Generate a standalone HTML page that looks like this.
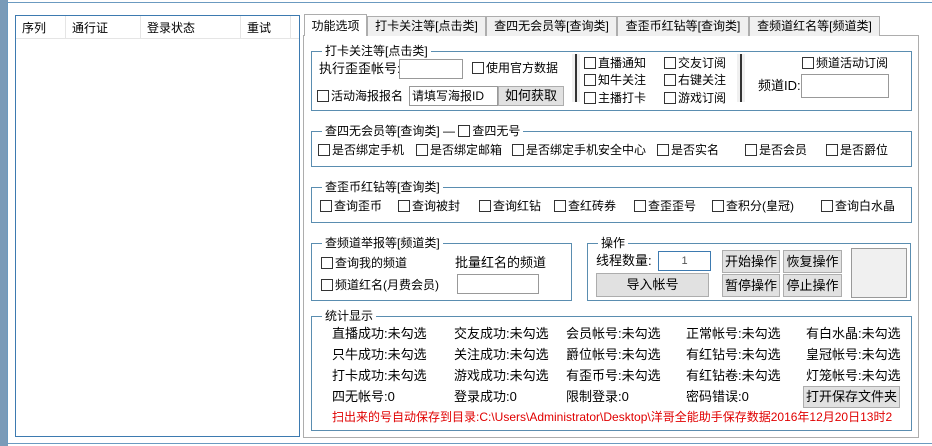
<!DOCTYPE html>
<html><head><meta charset="utf-8"><style>
*{box-sizing:border-box;margin:0;padding:0}
body{width:932px;height:446px;background:#fff;font-family:"Liberation Sans","Noto Sans CJK SC",sans-serif;font-size:12px;color:#000;position:relative;overflow:hidden}
.a{position:absolute;white-space:nowrap;line-height:16px}
.cb{display:inline-block;width:12px;height:12px;border:1px solid #333;background:#fff;vertical-align:-2px;margin-right:2px}
.grp{position:absolute;border:1px solid #5a8db0}
.gt{position:absolute;background:#fff;padding:0 3px;line-height:14px;top:-8px;left:10px;white-space:nowrap}
.in{position:absolute;border:1px solid #999;background:#fff}
.btn{position:absolute;border:1px solid #adadad;background:#e1e1e1;text-align:center;font-size:13px}
.tab{position:absolute;top:16px;height:20px;border:1px solid #adadad;border-bottom:none;background:#f0f0f0;text-align:center;line-height:18px}
.s{position:absolute;white-space:nowrap;font-size:13px;line-height:16px}
</style></head><body>
<div style="position:absolute;left:0;top:0;width:8px;height:446px;background:#7a9bb8"></div>
<div style="position:absolute;left:7px;top:2px;width:925px;height:442px;border:1px solid #6b9ac0;border-right:none;background:#fff"></div>
<div style="position:absolute;left:15px;top:15px;width:285px;height:422px;border:1px solid #3d7ab0;background:#fff"></div>
<div style="position:absolute;left:16px;top:16px;width:283px;height:23px;background:#fff;border-bottom:1px solid #e5e5e5"></div>
<div style="position:absolute;left:65px;top:16px;width:1px;height:23px;background:#e5e5e5"></div>
<div style="position:absolute;left:140px;top:16px;width:1px;height:23px;background:#e5e5e5"></div>
<div style="position:absolute;left:240px;top:16px;width:1px;height:23px;background:#e5e5e5"></div>
<div style="position:absolute;left:290px;top:16px;width:1px;height:23px;background:#e5e5e5"></div>
<div class="a" style="left:22px;top:20px">序列</div>
<div class="a" style="left:72px;top:20px">通行证</div>
<div class="a" style="left:147px;top:20px">登录状态</div>
<div class="a" style="left:247px;top:20px">重试</div>

<div style="position:absolute;left:303px;top:35px;width:616px;height:403px;border:1px solid #adadad;background:#fff"></div>
<div class="tab" style="left:304px;top:14px;height:22px;width:63px;background:#fff;line-height:22px">功能选项</div>
<div class="tab" style="left:367px;width:119px">打卡关注等[点击类]</div>
<div class="tab" style="left:486px;width:131px">查四无会员等[查询类]</div>
<div class="tab" style="left:617px;width:132px">查歪币红钻等[查询类]</div>
<div class="tab" style="left:749px;width:131px">查频道红名等[频道类]</div>

<div class="grp" style="left:311px;top:51px;width:601px;height:60px"><div class="gt">打卡关注等[点击类]</div></div>
<div class="a" style="left:319px;top:61px;font-size:13px;line-height:16px">执行歪歪帐号:</div>
<div class="in" style="left:399px;top:59px;width:64px;height:20px"></div>
<div class="a" style="left:472px;top:60px"><span class="cb"></span>使用官方数据</div>
<div class="a" style="left:317px;top:88px"><span class="cb"></span>活动海报报名</div>
<div class="in" style="left:409px;top:86px;width:89px;height:20px;font-size:12px;line-height:18px;padding-left:2px">请填写海报ID</div>
<div class="btn" style="left:498px;top:86px;width:66px;height:20px;line-height:18px">如何获取</div>
<div style="position:absolute;left:572px;top:54px;width:8px;height:48px;background:#f0f0f0"></div>
<div style="position:absolute;left:575px;top:54px;width:2px;height:48px;background:#333"></div>
<div style="position:absolute;left:737px;top:54px;width:8px;height:48px;background:#f0f0f0"></div>
<div style="position:absolute;left:740px;top:54px;width:2px;height:48px;background:#333"></div>
<div class="a" style="left:584px;top:55px"><span class="cb"></span>直播通知</div>
<div class="a" style="left:584px;top:72px"><span class="cb"></span>知牛关注</div>
<div class="a" style="left:584px;top:90px"><span class="cb"></span>主播打卡</div>
<div class="a" style="left:664px;top:55px"><span class="cb"></span>交友订阅</div>
<div class="a" style="left:664px;top:72px"><span class="cb"></span>右键关注</div>
<div class="a" style="left:664px;top:90px"><span class="cb"></span>游戏订阅</div>
<div class="a" style="left:802px;top:55px"><span class="cb"></span>频道活动订阅</div>
<div class="a" style="left:758px;top:78px;font-size:13px">频道ID:</div>
<div class="in" style="left:801px;top:74px;width:88px;height:24px"></div>

<div class="grp" style="left:311px;top:131px;width:601px;height:36px"><div class="gt">查四无会员等[查询类] — <span class="cb"></span>查四无号</div></div>
<div class="a" style="left:318px;top:142px"><span class="cb"></span>是否绑定手机</div>
<div class="a" style="left:416px;top:142px"><span class="cb"></span>是否绑定邮箱</div>
<div class="a" style="left:512px;top:142px"><span class="cb"></span>是否绑定手机安全中心</div>
<div class="a" style="left:657px;top:142px"><span class="cb"></span>是否实名</div>
<div class="a" style="left:745px;top:142px"><span class="cb"></span>是否会员</div>
<div class="a" style="left:826px;top:142px"><span class="cb"></span>是否爵位</div>

<div class="grp" style="left:311px;top:187px;width:601px;height:36px"><div class="gt">查歪币红钻等[查询类]</div></div>
<div class="a" style="left:320px;top:198px"><span class="cb"></span>查询歪币</div>
<div class="a" style="left:398px;top:198px"><span class="cb"></span>查询被封</div>
<div class="a" style="left:479px;top:198px"><span class="cb"></span>查询红钻</div>
<div class="a" style="left:554px;top:198px"><span class="cb"></span>查红砖券</div>
<div class="a" style="left:634px;top:198px"><span class="cb"></span>查歪歪号</div>
<div class="a" style="left:712px;top:198px"><span class="cb"></span>查积分(皇冠)</div>
<div class="a" style="left:821px;top:198px"><span class="cb"></span>查询白水晶</div>

<div class="grp" style="left:311px;top:243px;width:261px;height:58px"><div class="gt">查频道举报等[频道类]</div></div>
<div class="a" style="left:321px;top:255px"><span class="cb"></span>查询我的频道</div>
<div class="a" style="left:321px;top:277px"><span class="cb"></span>频道红名(月费会员)</div>
<div class="a" style="left:455px;top:255px;font-size:13px">批量红名的频道</div>
<div class="in" style="left:457px;top:274px;width:82px;height:20px"></div>

<div class="grp" style="left:587px;top:243px;width:324px;height:58px"><div class="gt">操作</div></div>
<div class="a" style="left:596px;top:253px;font-size:13px">线程数量:</div>
<div class="in" style="left:658px;top:251px;width:53px;height:20px;border-color:#3d7ab0;text-align:center;line-height:18px;font-size:11px;color:#555">1</div>
<div class="btn" style="left:596px;top:273px;width:113px;height:24px;line-height:22px">导入帐号</div>
<div class="btn" style="left:722px;top:250px;width:58px;height:23px;line-height:21px">开始操作</div>
<div class="btn" style="left:783px;top:250px;width:59px;height:23px;line-height:21px">恢复操作</div>
<div class="btn" style="left:722px;top:274px;width:58px;height:23px;line-height:21px">暂停操作</div>
<div class="btn" style="left:783px;top:274px;width:59px;height:23px;line-height:21px">停止操作</div>
<div style="position:absolute;left:851px;top:248px;width:56px;height:50px;border:1px solid #999;background:#f0f0f0"></div>

<div class="grp" style="left:311px;top:316px;width:601px;height:115px"><div class="gt">统计显示</div></div>
<div class="s" style="left:332px;top:326px">直播成功:未勾选</div>
<div class="s" style="left:332px;top:347px">只牛成功:未勾选</div>
<div class="s" style="left:332px;top:368px">打卡成功:未勾选</div>
<div class="s" style="left:332px;top:389px">四无帐号:0</div>
<div class="s" style="left:454px;top:326px">交友成功:未勾选</div>
<div class="s" style="left:454px;top:347px">关注成功:未勾选</div>
<div class="s" style="left:454px;top:368px">游戏成功:未勾选</div>
<div class="s" style="left:454px;top:389px">登录成功:0</div>
<div class="s" style="left:566px;top:326px">会员帐号:未勾选</div>
<div class="s" style="left:566px;top:347px">爵位帐号:未勾选</div>
<div class="s" style="left:566px;top:368px">有歪币号:未勾选</div>
<div class="s" style="left:566px;top:389px">限制登录:0</div>
<div class="s" style="left:686px;top:326px">正常帐号:未勾选</div>
<div class="s" style="left:686px;top:347px">有红钻号:未勾选</div>
<div class="s" style="left:686px;top:368px">有红钻卷:未勾选</div>
<div class="s" style="left:686px;top:389px">密码错误:0</div>
<div class="s" style="left:806px;top:326px">有白水晶:未勾选</div>
<div class="s" style="left:806px;top:347px">皇冠帐号:未勾选</div>
<div class="s" style="left:806px;top:368px">灯笼帐号:未勾选</div>
<div class="btn" style="left:803px;top:386px;width:97px;height:22px;line-height:20px">打开保存文件夹</div>
<div class="a" style="left:332px;top:409px;font-size:12px;color:#e00000">扫出来的号自动保存到目录:C:\Users\Administrator\Desktop\洋哥全能助手保存数据2016年12月20日13时2</div>
</body></html>
